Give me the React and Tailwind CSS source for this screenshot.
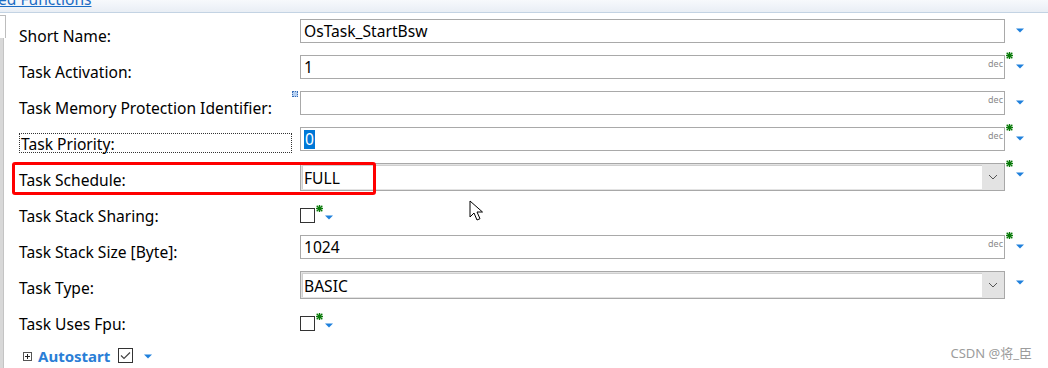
import React from "react";

const FONT = { fontFamily: '"Noto Sans", "Noto Sans CJK SC", sans-serif' };

function Asterisk() {
  return (
    <svg width="7" height="7" viewBox="0 0 7 7" className="block">
      <g stroke="#0a7a0a" strokeWidth="1.4" strokeLinecap="square">
        <line x1="3.5" y1="0.5" x2="3.5" y2="6.5" />
        <line x1="0.5" y1="3.5" x2="6.5" y2="3.5" />
        <line x1="1.2" y1="1.2" x2="5.8" y2="5.8" />
        <line x1="5.8" y1="1.2" x2="1.2" y2="5.8" />
      </g>
    </svg>
  );
}

function Tri() {
  return (
    <svg width="8" height="5" viewBox="0 0 8 5" className="block">
      <path d="M0 0.5h8L4 4.5z" fill="#1f80dc" />
    </svg>
  );
}

function Chevron() {
  return (
    <svg width="10" height="6" viewBox="0 0 10 6" className="block">
      <path d="M1 1l4 4 4-4" fill="none" stroke="#555" strokeWidth="1" />
    </svg>
  );
}

function Side({ star }) {
  return (
    <div className="w-[43px] h-full relative">
      {star && (
        <div className="absolute left-[1px] top-[3px]">
          <Asterisk />
        </div>
      )}
      <div className="absolute left-[11px] top-[15px]">
        <Tri />
      </div>
    </div>
  );
}

function TextInput({ value, dec, selected }) {
  return (
    <div className="mt-[6px] h-[24px] flex-1 border border-[#a9a9a9] bg-white relative flex items-center pl-[3px]">
      {selected ? (
        <span className="bg-[#0078d7] text-white text-[15.6px] leading-[19px] px-[1px]">{value}</span>
      ) : (
        <span className="text-[15.6px] leading-[20px] text-black">{value}</span>
      )}
      {dec && (
        <span className="absolute right-[1px] top-[3px] text-[9px] leading-[10px] text-[#8a8a8a]">dec</span>
      )}
    </div>
  );
}

function Combo({ value }) {
  return (
    <div className="mt-[6px] h-[28px] flex-1 border border-[#a8a8a8] bg-[#e3e3e3] flex">
      <div className="flex-1 bg-white mt-[1px] ml-[1px] mb-[1px] border-t border-l border-[#cfcfcf] flex items-center pl-[1px]">
        <span className="text-[15.6px] leading-[20px] text-black">{value}</span>
      </div>
      <div className="w-[22px] flex items-center justify-center">
        <Chevron />
      </div>
    </div>
  );
}

function Check({ checked }) {
  return (
    <div className="w-[15px] h-[15px] border border-[#333] bg-white flex items-center justify-center">
      {checked && (
        <svg width="11" height="9" viewBox="0 0 11 9">
          <path d="M1 4.5l3 3 6-6" fill="none" stroke="#444" strokeWidth="1.2" />
        </svg>
      )}
    </div>
  );
}

function Row({ label, children, star, side = true, focus, icon }) {
  return (
    <div className="h-[36px] flex items-start">
      <div className="w-[300px] pl-[19px] relative h-full">
        {focus ? (
          <div className="mt-[12px] w-[273px] h-[20px] border border-dotted border-[#333] pl-[1px] text-[15.6px] leading-[22px] text-black">
            <span className="relative top-[-1px]">{label}</span>
          </div>
        ) : (
          <div className="pt-[13px] text-[15.6px] leading-[20px] text-black">{label}</div>
        )}
        {icon && (
          <div className="absolute left-[292px] top-[6px] w-[6px] h-[6px] border border-dotted border-[#3a6db5] bg-[#b5d0f2]" />
        )}
      </div>
      {children}
      {side && <Side star={star} />}
    </div>
  );
}

function CheckRow({ label }) {
  return (
    <div className="h-[36px] flex items-start">
      <div className="w-[300px] pl-[19px] pt-[13px] text-[15.6px] leading-[20px] text-black">{label}</div>
      <div className="mt-[15px] flex items-start">
        <Check />
        <div className="ml-[1px] mt-[-3px]">
          <Asterisk />
        </div>
        <div className="ml-[2px] mt-[7px]">
          <Tri />
        </div>
      </div>
    </div>
  );
}

export default function App() {
  return (
    <div className="w-[1048px] h-[368px] bg-white relative overflow-hidden" style={FONT}>
      <div className="h-[13px] border-b border-[#c3d3e3] bg-gradient-to-b from-[#f7f9fc] to-[#e9eef5] overflow-hidden">
        <div className="mt-[-11px] ml-[-2px] text-[15.6px] leading-[20px] text-[#1a6cc4] underline">ed Functions</div>
      </div>

      <div className="flex h-[355px]">
        <div className="w-[6px] flex flex-col">
          <div className="mt-[2px] h-[23px] border-t border-r border-[#bdbdbd]" />
          <div className="flex-1 w-[4px] bg-[#d8d8d8] border-r border-[#c4c4c4]" />
        </div>
        <div className="flex-1 ml-[-6px]">
          <Row label="Short Name:">
            <TextInput value="OsTask_StartBsw" />
          </Row>
          <Row label="Task Activation:" star>
            <TextInput value="1" dec />
          </Row>
          <Row label="Task Memory Protection Identifier:" icon>
            <TextInput value="" dec />
          </Row>
          <Row label="Task Priority:" star focus>
            <TextInput value="0" dec selected />
          </Row>
          <Row label="Task Schedule:" star>
            <Combo value="FULL" />
          </Row>
          <CheckRow label="Task Stack Sharing:" />
          <Row label="Task Stack Size [Byte]:" star>
            <TextInput value="1024" dec />
          </Row>
          <Row label="Task Type:">
            <Combo value="BASIC" />
          </Row>
          <CheckRow label="Task Uses Fpu:" />
          <div className="h-[30px] flex items-start pl-[23px] pt-[9px]">
            <div className="mt-[6px] w-[9px] h-[9px] border border-[#555] flex items-center justify-center">
              <svg width="7" height="7" viewBox="0 0 7 7">
                <path d="M1 3.5h5M3.5 1v5" stroke="#222" strokeWidth="1" />
              </svg>
            </div>
            <span className="ml-[6px] text-[15px] leading-[20px] font-bold text-[#2a7ed6]">Autostart</span>
            <div className="ml-[8px] mt-[2px]">
              <Check checked />
            </div>
            <div className="ml-[11px] mt-[8px]">
              <Tri />
            </div>
          </div>
        </div>
      </div>

      {/* red annotation box */}
      <div className="absolute left-[12px] top-[162px] w-[364px] h-[33px] border-[3px] border-[#ff0000] rounded-[3px]" />

      {/* mouse cursor */}
      <svg className="absolute left-[469px] top-[200px]" width="14" height="22" viewBox="0 0 14 22">
        <path d="M1 1v16l4-4 3 7 3-1.3-3-6.7h5.5z" fill="white" stroke="black" strokeWidth="1" strokeLinejoin="miter" />
      </svg>

      <div className="absolute right-[16px] top-[344px] text-[13px] leading-[18px] text-[#9c9c9c]">CSDN @将_臣</div>
    </div>
  );
}
